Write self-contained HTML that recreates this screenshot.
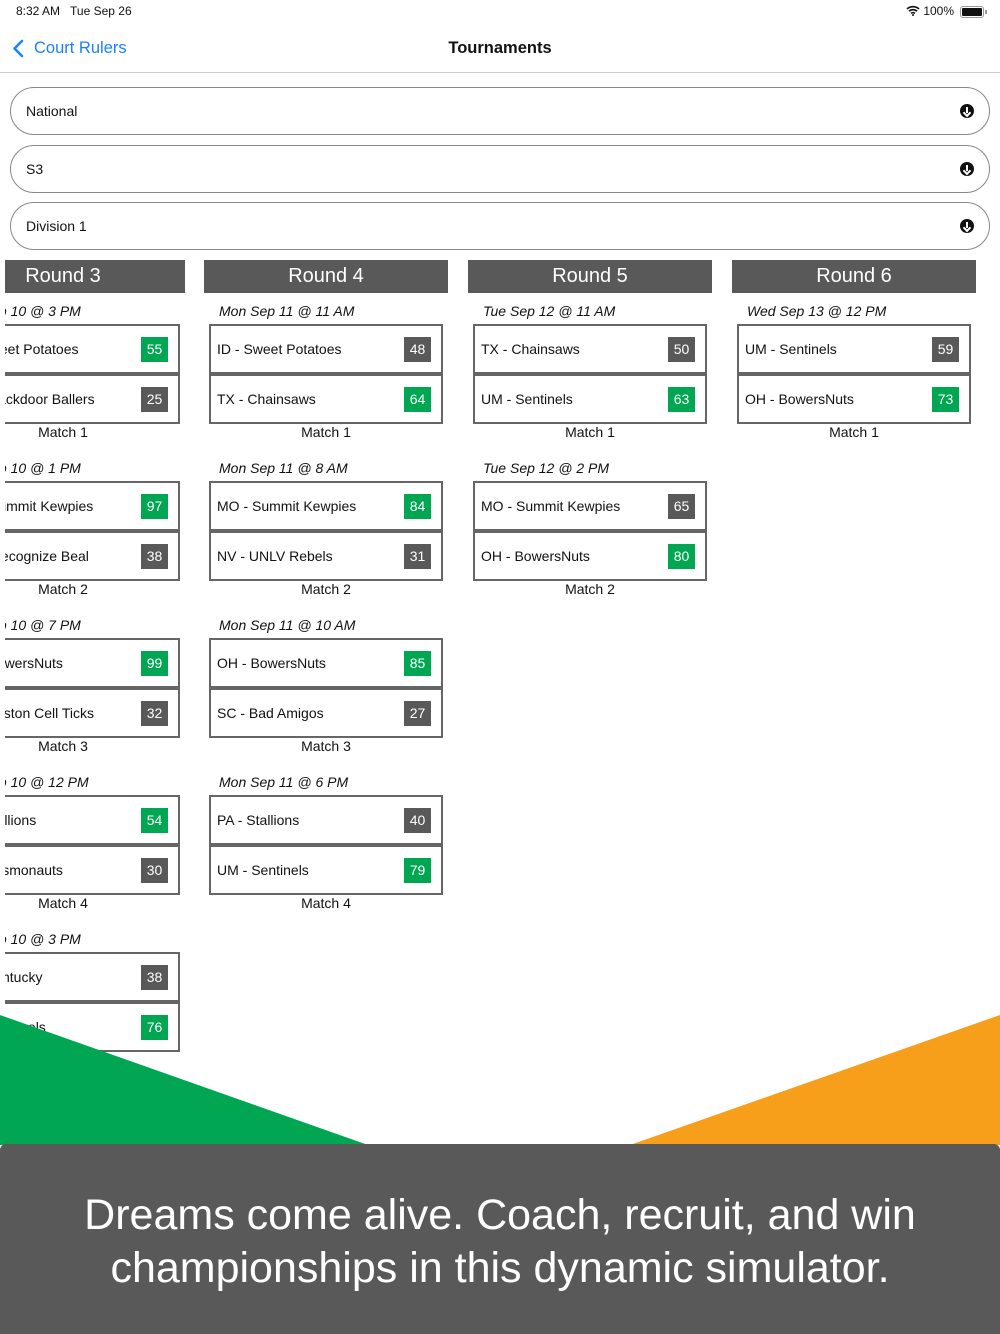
<!DOCTYPE html>
<html><head><meta charset="utf-8"><style>
*{margin:0;padding:0;box-sizing:border-box}
body{width:1000px;height:1334px;position:relative;overflow:hidden;background:#fff;font-family:"Liberation Sans",Arial,sans-serif;color:#111}
.a{position:absolute}
.dd{position:absolute;left:10px;width:980px;height:48px;border:1px solid #888;border-radius:24px;font-size:14px;line-height:46px;padding-left:15px}
.dd i{position:absolute;right:15px;top:16px;width:14px;height:14px;border-radius:50%;background:#111}
.dd i:after{content:"";position:absolute;left:6px;top:3px;width:2px;height:6px;background:#fff}
.dd i:before{content:"";position:absolute;left:4px;top:6px;width:4px;height:4px;border-right:2px solid #fff;border-bottom:2px solid #fff;transform:rotate(45deg)}
.rh{position:absolute;top:260px;width:244px;height:33px;background:#595959;color:#fff;font-size:20px;line-height:33px;text-align:center}
.m{position:absolute;width:234px;height:150px}
.dt{position:absolute;left:10px;top:-21px;font-size:14px;font-style:italic;white-space:nowrap}
.c1 .dt{left:7px}
.r{position:absolute;left:0;width:234px;height:50px;border:2px solid #666;font-size:14px;line-height:46px;padding-left:6px;white-space:nowrap}
.r b{font-weight:normal;position:absolute;right:10px;top:11px;width:27px;height:25px;line-height:25px;text-align:center;color:#fff;background:#595959;font-size:14px}
.r b.g{background:#00a651}
.ml{position:absolute;top:100px;left:0;width:234px;text-align:center;font-size:14px;line-height:17px}
</style></head><body>
<div class="a" style="left:16px;top:4px;font-size:12px">8:32 AM&nbsp;&nbsp;&nbsp;Tue Sep 26</div>
<div class="a" style="left:906px;top:4px;font-size:12px"><svg width="14" height="11" viewBox="0 0 14 11" style="vertical-align:-1px"><path d="M1 4a9 9 0 0 1 12 0M3 6.2a6 6 0 0 1 8 0M5 8.4a3 3 0 0 1 4 0" stroke="#111" stroke-width="1.6" fill="none"/><circle cx="7" cy="10" r="1" fill="#111"/></svg> 100%</div>
<div class="a" style="left:960px;top:6px;width:24px;height:12px;border:1px solid #999;border-radius:3px;padding:1px"><div style="width:100%;height:100%;background:#111;border-radius:1px"></div></div>
<div class="a" style="left:985px;top:10px;width:2px;height:4px;background:#999"></div>
<svg class="a" style="left:12px;top:39px" width="12" height="19" viewBox="0 0 12 19"><path d="M10 2L2.5 9.5L10 17" stroke="#1a82f7" stroke-width="2.5" fill="none" stroke-linecap="round" stroke-linejoin="round"/></svg>
<div class="a" style="left:34px;top:39px;font-size:16.5px;color:#1a82f7">Court Rulers</div>
<div class="a" style="left:0;width:1000px;top:39px;font-size:16.5px;text-align:center;font-weight:600">Tournaments</div>
<div class="a" style="left:0;top:72px;width:1000px;height:1px;background:#ccc"></div>
<div class="dd" style="top:87px">National<i></i></div>
<div class="dd" style="top:145px">S3<i></i></div>
<div class="dd" style="top:202px">Division 1<i></i></div>

<div class="a c1" style="left:5px;top:250px;width:190px;height:820px;overflow:hidden">
<div class="rh" style="left:-64px;top:10px">Round 3</div>
<div class="m" style="left:-59px;top:74px"><div class="dt">Sun Sep 10 @ 3 PM</div><div class="r" style="top:0">ID - Sweet Potatoes<b class="g">55</b></div><div class="r" style="top:50px">NY - Blackdoor Ballers<b>25</b></div><div class="ml">Match 1</div></div>
<div class="m" style="left:-59px;top:231px"><div class="dt">Sun Sep 10 @ 1 PM</div><div class="r" style="top:0">MO - Summit Kewpies<b class="g">97</b></div><div class="r" style="top:50px">AL - I Recognize Beal<b>38</b></div><div class="ml">Match 2</div></div>
<div class="m" style="left:-59px;top:388px"><div class="dt">Sun Sep 10 @ 7 PM</div><div class="r" style="top:0">OH - BowersNuts<b class="g">99</b></div><div class="r" style="top:50px">MA - Boston Cell Ticks<b>32</b></div><div class="ml">Match 3</div></div>
<div class="m" style="left:-59px;top:545px"><div class="dt">Sun Sep 10 @ 12 PM</div><div class="r" style="top:0">PA - Stallions<b class="g">54</b></div><div class="r" style="top:50px">TX - Cosmonauts<b>30</b></div><div class="ml">Match 4</div></div>
<div class="m" style="left:-59px;top:702px"><div class="dt">Sun Sep 10 @ 3 PM</div><div class="r" style="top:0">KY - Kentucky<b>38</b></div><div class="r" style="top:50px">UM - Sentinels<b class="g">76</b></div></div>
</div>

<div class="rh" style="left:204px">Round 4</div>
<div class="m" style="left:209px;top:324px"><div class="dt">Mon Sep 11 @ 11 AM</div><div class="r" style="top:0">ID - Sweet Potatoes<b>48</b></div><div class="r" style="top:50px">TX - Chainsaws<b class="g">64</b></div><div class="ml">Match 1</div></div>
<div class="m" style="left:209px;top:481px"><div class="dt">Mon Sep 11 @ 8 AM</div><div class="r" style="top:0">MO - Summit Kewpies<b class="g">84</b></div><div class="r" style="top:50px">NV - UNLV Rebels<b>31</b></div><div class="ml">Match 2</div></div>
<div class="m" style="left:209px;top:638px"><div class="dt">Mon Sep 11 @ 10 AM</div><div class="r" style="top:0">OH - BowersNuts<b class="g">85</b></div><div class="r" style="top:50px">SC - Bad Amigos<b>27</b></div><div class="ml">Match 3</div></div>
<div class="m" style="left:209px;top:795px"><div class="dt">Mon Sep 11 @ 6 PM</div><div class="r" style="top:0">PA - Stallions<b>40</b></div><div class="r" style="top:50px">UM - Sentinels<b class="g">79</b></div><div class="ml">Match 4</div></div>

<div class="rh" style="left:468px">Round 5</div>
<div class="m" style="left:473px;top:324px"><div class="dt">Tue Sep 12 @ 11 AM</div><div class="r" style="top:0">TX - Chainsaws<b>50</b></div><div class="r" style="top:50px">UM - Sentinels<b class="g">63</b></div><div class="ml">Match 1</div></div>
<div class="m" style="left:473px;top:481px"><div class="dt">Tue Sep 12 @ 2 PM</div><div class="r" style="top:0">MO - Summit Kewpies<b>65</b></div><div class="r" style="top:50px">OH - BowersNuts<b class="g">80</b></div><div class="ml">Match 2</div></div>

<div class="rh" style="left:732px">Round 6</div>
<div class="m" style="left:737px;top:324px"><div class="dt">Wed Sep 13 @ 12 PM</div><div class="r" style="top:0">UM - Sentinels<b>59</b></div><div class="r" style="top:50px">OH - BowersNuts<b class="g">73</b></div><div class="ml">Match 1</div></div>

<svg class="a" style="left:0;top:1010px" width="1000" height="140" viewBox="0 1010 1000 140"><polygon points="0,1015 368,1145 0,1145" fill="#00a651"/><polygon points="1000,1015 1000,1145 630,1145" fill="#f79e1b"/></svg>
<div class="a" style="left:0;top:1144px;width:1000px;height:190px;background:#595959;border-radius:6px 6px 0 0;color:#fff;font-size:43px;line-height:53px;text-align:center;padding-top:45px">Dreams come alive. Coach, recruit, and win<br>championships in this dynamic simulator.</div>
</body></html>
